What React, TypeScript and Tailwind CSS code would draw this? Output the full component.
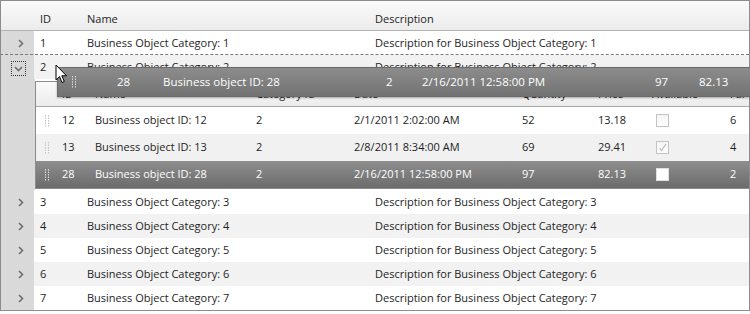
import React from "react";

const FONT = "font-['Open_Sans',sans-serif]";

function Chevron({ down = false }: { down?: boolean }) {
  return down ? (
    <svg width="9" height="6" viewBox="0 0 9 6">
      <polyline points="1,1 4.5,4.5 8,1" fill="none" stroke="#6f6f6f" strokeWidth="1.6" />
    </svg>
  ) : (
    <svg width="6" height="9" viewBox="0 0 6 9">
      <polyline points="1,1 4.5,4.5 1,8" fill="none" stroke="#6f6f6f" strokeWidth="1.6" />
    </svg>
  );
}

function Handle({ color }: { color: string }) {
  const dots = [];
  for (let r = 0; r < 5; r++) {
    for (let c = 0; c < 2; c++) {
      dots.push(<rect key={`${r}-${c}`} x={c * 3} y={r * 2.5} width="1" height="1.5" fill={color} />);
    }
  }
  return (
    <svg width="5" height="12" viewBox="0 0 5 12">
      {dots}
    </svg>
  );
}

function Checkbox({ checked = false, dark = false }: { checked?: boolean; dark?: boolean }) {
  return (
    <div
      className={`w-[13px] h-[13px] border flex items-center justify-center ${
        dark ? "border-[#e0e0e0] bg-white" : "border-[#c4c4c4] bg-gradient-to-b from-[#f4f4f4] to-white"
      }`}
    >
      {checked && (
        <svg width="9" height="9" viewBox="0 0 9 9">
          <polyline points="1.5,5 3.5,7.5 8,1" fill="none" stroke="#b8b8b8" strokeWidth="1.2" />
        </svg>
      )}
    </div>
  );
}

const mainRows = [3, 4, 5, 6, 7];

function MainRow({ n, alt }: { n: number; alt: boolean }) {
  return (
    <div className="flex h-[24px]">
      <div className="w-[33px] bg-[#d9d9d9] flex items-center justify-center pl-[7px]">
        <Chevron />
      </div>
      <div className={`flex flex-1 items-center ${alt ? "bg-[#f2f2f2]" : "bg-white"}`}>
        <div className="w-[47px] pl-[6px]">{n}</div>
        <div className="w-[288px] pl-[6px]">Business Object Category: {n}</div>
        <div className="pl-[6px] whitespace-nowrap">Description for Business Object Category: {n}</div>
      </div>
    </div>
  );
}

type NRow = { id: number; date: string; qty: number; price: string; checked: boolean; far: number };
const nested: NRow[] = [
  { id: 12, date: "2/1/2011 2:02:00 AM", qty: 52, price: "13.18", checked: false, far: 6 },
  { id: 13, date: "2/8/2011 8:34:00 AM", qty: 69, price: "29.41", checked: true, far: 4 },
  { id: 28, date: "2/16/2011 12:58:00 PM", qty: 97, price: "82.13", checked: false, far: 2 },
];

function NestedRow({ r, idx }: { r: NRow; idx: number }) {
  const sel = idx === 2;
  const bg = sel
    ? "bg-gradient-to-b from-[#8e8e8e] to-[#6c6c6c] text-white"
    : idx === 1
    ? "bg-[#f1f1f1]"
    : "bg-white";
  return (
    <div className={`flex h-[27px] items-center whitespace-nowrap ${bg}`}>
      <div className="w-[20px] flex justify-center pl-[2px]">
        <Handle color={sel ? "#d8d8d8" : "#c4c4c4"} />
      </div>
      <div className="w-[33px] pl-[6px]">{r.id}</div>
      <div className="w-[161px] pl-[6px]">Business object ID: {r.id}</div>
      <div className="w-[98px] pl-[6px]">2</div>
      <div className="w-[168px] pl-[6px]">{r.date}</div>
      <div className="w-[76px] pl-[6px]">{r.qty}</div>
      <div className="w-[54px] pl-[6px]">{r.price}</div>
      <div className="w-[78px] pl-[10px]">
        <Checkbox checked={r.checked} dark={sel} />
      </div>
      <div className="pl-[6px]">{r.far}</div>
    </div>
  );
}

export default function App() {
  return (
    <div className={`w-[750px] h-[314px] bg-white relative overflow-hidden text-[11px] text-[#1e1e1e] ${FONT}`}>
      <div className="w-[750px] h-[311px] border border-[#8c8c8c] overflow-hidden">
        {/* header */}
        <div className="flex h-[30px] border-b border-[#b3b3b3] bg-gradient-to-b from-[#fafafa] to-[#ececec]">
          <div className="w-[33px]" />
          <div className="w-[47px] pl-[6px] pt-[10px]">ID</div>
          <div className="w-[288px] pl-[6px] pt-[10px]">Name</div>
          <div className="pl-[6px] pt-[10px]">Description</div>
        </div>
        {/* row 1 */}
        <div className="flex h-[24px]">
          <div className="w-[33px] bg-[#d9d9d9] flex items-center justify-center pl-[7px]">
            <Chevron />
          </div>
          <div className="flex flex-1 items-center bg-white">
            <div className="w-[47px] pl-[6px]">1</div>
            <div className="w-[288px] pl-[6px]">Business Object Category: 1</div>
            <div className="pl-[6px] whitespace-nowrap">Description for Business Object Category: 1</div>
          </div>
        </div>
        {/* row 2 expanded */}
        <div className="flex h-[24px] relative">
          <div className="absolute left-[-1px] right-0 top-[-1px] border-t border-dashed border-[#7a7a7a]" />
          <div className="w-[33px] bg-[#d9d9d9] flex items-start pl-[10px] pt-[6px]">
            <div className="w-[15px] h-[15px] border border-dotted border-[#333] flex items-center justify-center">
              <Chevron down />
            </div>
          </div>
          <div className="flex flex-1 items-center bg-[#f2f2f2]">
            <div className="w-[47px] pl-[6px]">2</div>
            <div className="w-[288px] pl-[6px]">Business Object Category: 2</div>
            <div className="pl-[6px] whitespace-nowrap">Description for Business Object Category: 2</div>
          </div>
        </div>
        {/* detail */}
        <div className="flex h-[111px]">
          <div className="w-[34px] bg-[#d9d9d9]" />
          <div className="flex-1 pt-[2px] pb-[1px] bg-white">
            <div className="border-l border-t border-b border-[#8c8c8c] h-[108px]">
              <div className="flex h-[25px] items-center border-b border-[#a8a8a8] bg-gradient-to-b from-[#fafafa] to-[#ececec] whitespace-nowrap">
                <div className="w-[20px]" />
                <div className="w-[33px] pl-[6px]">ID</div>
                <div className="w-[161px] pl-[6px]">Name</div>
                <div className="w-[98px] pl-[6px]">Category Id</div>
                <div className="w-[168px] pl-[6px]">Date</div>
                <div className="w-[76px] pl-[6px]">Quantity</div>
                <div className="w-[54px] pl-[6px]">Price</div>
                <div className="w-[78px] pl-[6px]">Available</div>
                <div className="pl-[6px]">Far</div>
              </div>
              {nested.map((r, i) => (
                <NestedRow key={r.id} r={r} idx={i} />
              ))}
            </div>
          </div>
        </div>
        {mainRows.map((n, i) => (
          <MainRow key={n} n={n} alt={i % 2 === 1} />
        ))}
      </div>

      {/* drag overlay */}
      <div className="absolute left-[57px] top-[67px] w-[720px] h-[30px] flex items-center whitespace-nowrap text-white text-[11.5px] border border-[#6a6a6a] bg-gradient-to-b from-[#8c8c8c] to-[#737373] shadow-[0_1px_2px_rgba(0,0,0,0.3)]">
        <div className="w-[59px] pl-[14px]">
          <Handle color="#d8d8d8" />
        </div>
        <div className="w-[46px]">28</div>
        <div className="w-[223px]">Business object ID: 28</div>
        <div className="w-[36px]">2</div>
        <div className="w-[233px]">2/16/2011 12:58:00 PM</div>
        <div className="w-[44px]">97</div>
        <div>82.13</div>
      </div>

      {/* cursor */}
      <svg className="absolute left-[55px] top-[64px]" width="13" height="20" viewBox="0 0 13 20">
        <path
          d="M1 1 L1 16 L4.5 12.5 L7 18.5 L9.3 17.5 L6.8 11.8 L11.5 11.8 Z"
          fill="white"
          stroke="black"
          strokeWidth="1"
          strokeLinejoin="miter"
        />
      </svg>
    </div>
  );
}
